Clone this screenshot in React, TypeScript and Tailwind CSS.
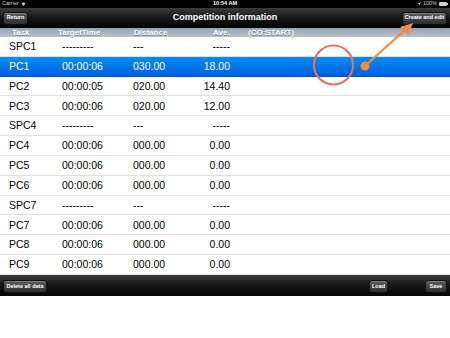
import React from 'react';

interface Row {
  task: string;
  time: string;
  distance: string;
  ave: string;
}

const ROWS: Row[] = [
  { task: 'SPC1', time: '---------', distance: '---', ave: '-----' },
  { task: 'PC1', time: '00:00:06', distance: '030.00', ave: '18.00' },
  { task: 'PC2', time: '00:00:05', distance: '020.00', ave: '14.40' },
  { task: 'PC3', time: '00:00:06', distance: '020.00', ave: '12.00' },
  { task: 'SPC4', time: '---------', distance: '---', ave: '-----' },
  { task: 'PC4', time: '00:00:06', distance: '000.00', ave: '0.00' },
  { task: 'PC5', time: '00:00:06', distance: '000.00', ave: '0.00' },
  { task: 'PC6', time: '00:00:06', distance: '000.00', ave: '0.00' },
  { task: 'SPC7', time: '---------', distance: '---', ave: '-----' },
  { task: 'PC7', time: '00:00:06', distance: '000.00', ave: '0.00' },
  { task: 'PC8', time: '00:00:06', distance: '000.00', ave: '0.00' },
  { task: 'PC9', time: '00:00:06', distance: '000.00', ave: '0.00' },
];

function BarButton({ label, className = '' }: { label: string; className?: string }) {
  return (
    <button
      className={`flex h-[13px] items-center justify-center whitespace-nowrap rounded-[3px] border border-[#111] bg-gradient-to-b from-[#5e5e5e] to-[#2c2c2c] px-0 text-[5.5px] font-bold leading-none text-white shadow-[inset_0_1px_0_rgba(255,255,255,0.2)] ${className}`}
    >
      {label}
    </button>
  );
}

export default function App() {
  return (
    <div
      className="relative h-[338px] w-[450px] overflow-hidden bg-white"
      style={{ fontFamily: '"Liberation Sans", Arial, sans-serif' }}
    >
      {/* status bar */}
      <div className="flex h-[8px] items-center justify-between bg-black px-[2px] text-[5.5px] leading-none text-[#cfcfcf]">
        <div className="flex w-[60px] items-center gap-[2px]">
          <span>Carrier</span>
          <svg width="5" height="4" viewBox="0 0 10 8">
            <path d="M5 8 L1 3 A6 6 0 0 1 9 3 Z" fill="#cfcfcf" />
          </svg>
        </div>
        <span className="font-bold text-white">10:54 AM</span>
        <div className="flex w-[60px] items-center justify-end gap-[2px]">
          <svg width="4" height="4" viewBox="0 0 8 8">
            <path d="M8 0 L0 4 L4 4 L4 8 Z" fill="#cfcfcf" />
          </svg>
          <span>100%</span>
          <div className="flex items-center">
            <div className="h-[4px] w-[8px] rounded-[1px] border border-[#cfcfcf] bg-[#cfcfcf]" />
            <div className="h-[2px] w-[1px] bg-[#cfcfcf]" />
          </div>
        </div>
      </div>

      {/* nav bar */}
      <div className="relative flex h-[20px] items-center justify-between bg-gradient-to-b from-[#3d3d3d] via-[#161616] to-[#050505] px-[3px]">
        <BarButton label="Return" className="w-[25px]" />
        <span className="absolute left-0 right-0 text-center text-[9px] font-bold text-white">
          Competition information
        </span>
        <BarButton label="Create and edit" className="relative w-[45px]" />
      </div>

      {/* section header */}
      <div className="flex h-[9px] items-center bg-gradient-to-b from-[#97a3b0] to-[#b9c1cb] text-[8px] font-bold leading-none text-white [text-shadow:0_1px_0_rgba(80,90,100,0.6)]">
        <span className="w-[58px] pl-[12px]">Task</span>
        <span className="w-[76px]">TargetTime</span>
        <span className="w-[79px]">Distance</span>
        <span className="w-[35px]">Ave.</span>
        <span>(CO:START)</span>
      </div>

      {/* rows */}
      <div className="flex h-[238px] flex-col">
        {ROWS.map((row, i) => {
          const selected = i === 1;
          return (
            <div
              key={row.task}
              className={`flex flex-1 items-center border-b text-[10.5px] leading-none ${
                selected
                  ? 'border-[#0452c4] bg-gradient-to-b from-[#0b8cf2] to-[#015fe2] text-white'
                  : 'border-[#e0e0e0] text-black'
              }`}
            >
              <span className="w-[62px] pl-[9px]">{row.task}</span>
              <span className="w-[71px]">{row.time}</span>
              <span className="w-[57px]">{row.distance}</span>
              <span className="w-[40px] text-right">{row.ave}</span>
            </div>
          );
        })}
      </div>

      {/* bottom toolbar */}
      <div className="flex h-[21px] items-center bg-gradient-to-b from-[#3d3d3d] via-[#161616] to-[#050505] px-[3px] pt-[2px]">
        <BarButton label="Delete all data" className="w-[44px]" />
        <div className="flex-1" />
        <BarButton label="Load" className="w-[19px]" />
        <div className="w-[37px]" />
        <BarButton label="Save" className="w-[22px]" />
      </div>

      {/* annotation overlay */}
      <svg className="pointer-events-none absolute left-0 top-0" width="450" height="338">
        <circle cx="333.5" cy="65" r="19.5" fill="none" stroke="#e4735a" strokeWidth="2.2" />
        <line x1="365" y1="66" x2="405" y2="30" stroke="#f58a3f" strokeWidth="2.2" />
        <circle cx="365" cy="66" r="4.5" fill="#f58a3f" />
        <polygon points="413,23 400,27 408,35" fill="#f58a3f" />
      </svg>
    </div>
  );
}
